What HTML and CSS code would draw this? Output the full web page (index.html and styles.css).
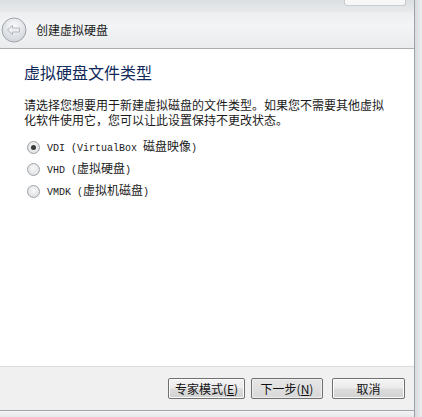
FILE: index.html
```html
<!DOCTYPE html>
<html lang="zh-CN">
<head>
<meta charset="utf-8">
<link rel="stylesheet" href="styles.css">
</head>
<body>
<div class="window">
  <div class="dialog">
    <div class="topstrip"><div class="blurbox"></div></div>
    <div class="header">
      <div class="back">
        <svg width="26" height="26" viewBox="0 0 26 26">
          <defs>
            <radialGradient id="g" cx="50%" cy="35%" r="65%">
              <stop offset="0" stop-color="#fbfbfc"/>
              <stop offset="1" stop-color="#d0d4d9"/>
            </radialGradient>
          </defs>
          <circle cx="13" cy="13" r="12" fill="url(#g)" stroke="#9fa5ac" stroke-width="1"/>
          <path d="M6.5 13 L11.5 8.3 L11.5 11 L18.5 11 L18.5 15 L11.5 15 L11.5 17.7 Z" fill="#eceef0" stroke="#aab0b7" stroke-width="0.9" stroke-linejoin="round"/>
        </svg>
      </div>
      <div class="title">创建虚拟硬盘</div>
    </div>
    <div class="main">
      <h1 class="heading">虚拟硬盘文件类型</h1>
      <p class="desc">请选择您想要用于新建虚拟磁盘的文件类型。如果您不需要其他虚拟化软件使用它，您可以让此设置保持不更改状态。</p>
      <div class="options">
        <div class="option"><span class="radio checked"></span><span class="label"><span class="lat">VDI (VirtualBox </span>磁盘映像<span class="lat">)</span></span></div>
        <div class="option"><span class="radio"></span><span class="label"><span class="lat">VHD (</span>虚拟硬盘<span class="lat">)</span></span></div>
        <div class="option"><span class="radio"></span><span class="label"><span class="lat">VMDK (</span>虚拟机磁盘<span class="lat">)</span></span></div>
      </div>
    </div>
    <div class="footer">
      <button class="btn btn-expert">专家模式(<u>E</u>)</button>
      <button class="btn btn-next">下一步(<u>N</u>)</button>
      <button class="btn btn-cancel">取消</button>
    </div>
    <div class="bottomstrip"></div>
  </div>
  <div class="frame"></div>
</div>
</body>
</html>
```
FILE: styles.css
```css
html, body {
  margin: 0;
  padding: 0;
  width: 422px;
  height: 417px;
  overflow: hidden;
  background: #e4e7ea;
  font-family: "Noto Sans CJK SC", sans-serif;
}

.window {
  display: flex;
  height: 417px;
}

.dialog {
  width: 414px;
  display: flex;
  flex-direction: column;
  border-right: 1px solid #9ea3a8;
}

.frame {
  flex: 1;
  background: linear-gradient(to right, #d6dadf, #eceef0);
}

.topstrip {
  height: 12px;
  background: linear-gradient(to bottom, #dcdfe2, #e8eaec);
  position: relative;
}

.blurbox {
  position: absolute;
  left: 344px;
  width: 60px;
  top: 0;
  height: 5px;
  background: #f7f7f7;
  border: 1px solid #c9ccd0;
  border-top: none;
  border-radius: 0 0 3px 3px;
}

.header {
  height: 36px;
  display: flex;
  align-items: center;
  gap: 9px;
  padding-left: 1px;
  background: linear-gradient(to bottom, #eceef0, #f3f4f5 40%, #e9ebed);
  border-bottom: 1px solid #a9adb2;
}

.back {
  width: 26px;
  height: 26px;
  display: flex;
}

.title {
  font-size: 12px;
  color: #1a1a1a;
  line-height: 14px;
}

.main {
  flex: 1;
  background: #ffffff;
  padding: 13px 10px 0 24px;
}

.heading {
  margin: 0;
  font-weight: normal;
  font-size: 16px;
  line-height: 20px;
  color: #10295a;
}

.desc {
  margin: 15px 0 0 0;
  font-size: 12px;
  line-height: 15px;
  color: #1a1a1a;
  width: 366px;
}

.options {
  margin-top: 13px;
  display: flex;
  flex-direction: column;
  gap: 8px;
}

.option {
  display: flex;
  align-items: center;
  height: 14px;
  padding-left: 3px;
}

.radio {
  width: 11px;
  height: 11px;
  border-radius: 50%;
  border: 1px solid #9ea3a9;
  background: radial-gradient(circle at 50% 40%, #f8f8f8, #d8dadd);
  margin-right: 7px;
  position: relative;
  box-sizing: content-box;
}

.radio.checked::after {
  content: "";
  position: absolute;
  left: 3px;
  top: 3px;
  width: 5px;
  height: 5px;
  border-radius: 50%;
  background: #3a3a3a;
}

.label {
  font-size: 12px;
  color: #1a1a1a;
  line-height: 14px;
  white-space: pre;
}

.lat {
  font-family: "Liberation Mono", monospace;
  font-size: 10px;
}

.footer {
  height: 43px;
  background: #f0f0f0;
  border-top: 1px solid #dcdcdc;
  display: flex;
  align-items: center;
  justify-content: flex-end;
  gap: 6px;
  padding-right: 9px;
}

.btn {
  height: 21px;
  padding: 0;
  border: 1px solid #707070;
  border-radius: 2px;
  background: linear-gradient(to bottom, #f4f4f4 0, #ebebeb 48%, #dddddd 52%, #d1d1d1 100%);
  font-family: "Noto Sans CJK SC", sans-serif;
  font-size: 12px;
  color: #111111;
  line-height: 17px;
  box-shadow: inset 0 0 0 1px #fbfbfb;
}

.btn u {
  text-decoration: underline;
}

.btn-expert {
  width: 77px;
}

.btn-next {
  width: 72px;
  margin-right: 3px;
  background: linear-gradient(to bottom, #e6e6e6, #d8d8d8);
  box-shadow: inset 0 0 0 1px #eeeeee;
}

.btn-cancel {
  width: 73px;
}

.bottomstrip {
  height: 6px;
  border-top: 1px solid #a3a7ab;
  background: linear-gradient(to bottom, #f4f5f6, #e6e8ea);
}
```
